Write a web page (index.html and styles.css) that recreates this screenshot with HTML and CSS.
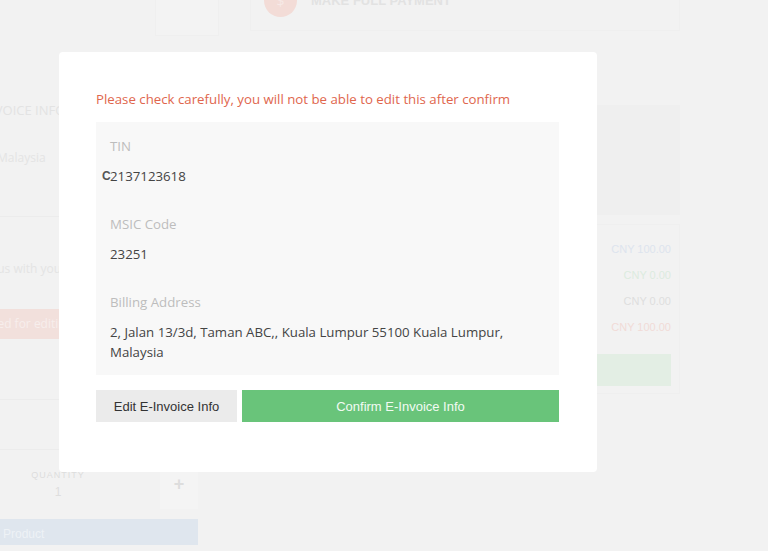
FILE: index.html
```html
<!DOCTYPE html>
<html>
<head>
<meta charset="utf-8">
<link rel="stylesheet" href="styles.css">
</head>
<body>
<div class="page">
  <div class="topbar">
    <div class="tile"></div>
    <div class="paycard">
      <span class="paydot">$</span>
      <span class="paytext">MAKE FULL PAYMENT</span>
    </div>
  </div>
  <div class="content">
    <div class="left">
      <div class="sec sec1">
        <div class="ltitle">E-INVOICE INFO</div>
        <div class="ltext">Malaysia</div>
      </div>
      <div class="sec sec2">
        <div class="ltext">Contact us with your</div>
        <div class="pinkbtn">Unlocked for editing</div>
      </div>
      <div class="sec sec3"></div>
      <div class="qtyrow">
        <div class="qty">
          <div class="qlabel">QUANTITY</div>
          <div class="qval">1</div>
        </div>
        <div class="plus">+</div>
      </div>
      <div class="product">Product</div>
    </div>
    <div class="main">
      <div class="mainpanel"></div>
      <div class="summary">
        <div class="amt blue">CNY 100.00</div>
        <div class="amt green">CNY 0.00</div>
        <div class="amt gray">CNY 0.00</div>
        <div class="amt red">CNY 100.00</div>
        <div class="greenbar"></div>
      </div>
    </div>
  </div>
</div>

<div class="modal">
  <p class="warn">Please check carefully, you will not be able to edit this after confirm</p>
  <div class="info">
    <div class="row">
      <div class="label">TIN</div>
      <div class="value"><span class="cglyph">C</span>2137123618</div>
    </div>
    <div class="row">
      <div class="label">MSIC Code</div>
      <div class="value">23251</div>
    </div>
    <div class="row">
      <div class="label">Billing Address</div>
      <div class="value">2, Jalan 13/3d, Taman ABC,, Kuala Lumpur 55100 Kuala Lumpur, Malaysia</div>
    </div>
  </div>
  <div class="actions">
    <button class="btn edit">Edit E-Invoice Info</button>
    <button class="btn confirm">Confirm E-Invoice Info</button>
  </div>
</div>
</body>
</html>
```

FILE: styles.css
```css
* { box-sizing: border-box; }
html, body {
  margin: 0;
  padding: 0;
  width: 768px;
  height: 551px;
  overflow: hidden;
  background: #f2f2f2;
  font-family: "Open Sans", "Liberation Sans", sans-serif;
}
.page {
  position: relative;
  height: 551px;
  overflow: hidden;
}
.topbar {
  display: flex;
  height: 36px;
  margin-top: -6px;
}
.tile {
  margin-left: 155px;
  width: 64px;
  height: 42px;
  border: 1px solid #efefef;
  background: #f3f3f3;
}
.paycard {
  margin-left: 31px;
  width: 430px;
  height: 37px;
  border: 1px solid #efefef;
  background: #f2f2f2;
  display: flex;
  align-items: flex-start;
}
.paydot {
  margin-left: 13px;
  margin-top: -11px;
  width: 33px;
  height: 33px;
  border-radius: 50%;
  background: #f3dcd7;
  color: #f6e9e6;
  font-size: 14px;
  text-align: center;
  line-height: 33px;
}
.paytext {
  margin-left: 14px;
  margin-top: -2px;
  font-family: "Liberation Sans", sans-serif;
  font-weight: bold;
  font-size: 13px;
  color: #e2e2e2;
}
.content {
  display: flex;
  height: 515px;
}
.left {
  width: 198px;
  overflow: hidden;
  display: flex;
  flex-direction: column;
}
.left > * { flex-shrink: 0; }
.sec {
  border-bottom: 1px solid #ececec;
}
.sec1 {
  height: 187px;
  padding-top: 70px;
}
.ltitle {
  font-size: 13px;
  color: #e3e3e3;
  line-height: 20px;
  margin-left: -30px;
  white-space: nowrap;
}
.ltext {
  font-size: 12px;
  color: #e4e4e4;
  line-height: 20px;
  margin-top: 28px;
  margin-left: -3px;
  white-space: nowrap;
}
.sec2 {
  height: 183px;
  padding-top: 42px;
}
.sec2 .ltext { margin-top: 0; margin-left: -49px; }
.pinkbtn {
  margin-top: 30px;
  margin-left: -55px;
  width: 180px;
  height: 30px;
  background: #f2e0dc;
  color: #f7eeec;
  font-size: 12px;
  line-height: 30px;
  padding-left: 14px;
  white-space: nowrap;
}
.sec3 {
  height: 50px;
}
.qtyrow {
  display: flex;
  height: 55px;
  margin-top: 4px;
}
.qty {
  flex: 1;
  text-align: center;
  padding-top: 16px;
  padding-right: 44px;
}
.qlabel {
  font-family: "Liberation Sans", sans-serif;
  font-size: 9px;
  line-height: 10px;
  letter-spacing: 1px;
  color: #dddddd;
}
.qval {
  font-family: "Liberation Sans", sans-serif;
  font-size: 12px;
  line-height: 14px;
  color: #dedede;
  margin-top: 5px;
}
.plus {
  width: 38px;
  background: #f4f4f4;
  color: #dddddd;
  font-family: "Liberation Sans", sans-serif;
  font-size: 18px;
  line-height: 21px;
  font-weight: bold;
  text-align: center;
  padding-top: 20px;
}
.product {
  height: 40px;
  background: #dfe6ee;
  color: #eef2f6;
  font-family: "Liberation Sans", sans-serif;
  font-size: 12px;
  line-height: 14px;
  padding: 8px 0 0 3px;
  margin-top: 10px;
}
.main {
  flex: 1;
  padding-left: 22px;
  display: flex;
  flex-direction: column;
}
.mainpanel {
  margin-top: 75px;
  width: 460px;
  height: 110px;
  background: #efefef;
}
.summary {
  margin-top: 9px;
  width: 460px;
  height: 170px;
  background: #f2f2f2;
  border: 1px solid #efefef;
  padding: 11px 8px 0 0;
  display: flex;
  flex-direction: column;
  align-items: flex-end;
}
.amt {
  font-family: "Liberation Sans", sans-serif;
  font-size: 11px;
  line-height: 26px;
}
.amt.blue { color: #dde4ee; }
.amt.green { color: #dcebdf; }
.amt.gray { color: #dedede; }
.amt.red { color: #f1dbd7; }
.greenbar {
  margin-top: 14px;
  width: 100%;
  height: 32px;
  background: #e3eee4;
}

/* modal */
.modal {
  position: absolute;
  left: 59px;
  top: 52px;
  width: 538px;
  height: 420px;
  background: #ffffff;
  border-radius: 4px;
  padding: 37px 38px 0 37px;
}
.warn {
  margin: 0;
  color: #e0664d;
  font-size: 13.25px;
  line-height: 20px;
}
.info {
  margin-top: 13px;
  background: #f8f8f8;
  padding: 14px 14px 13px 14px;
}
.row { margin-bottom: 28px; }
.row:last-child { margin-bottom: 0; }
.label {
  color: #bdbdbd;
  font-size: 13.25px;
  line-height: 20px;
}
.value {
  margin-top: 10px;
  color: #444444;
  font-size: 13.25px;
  line-height: 20px;
}
.cglyph {
  display: inline-block;
  width: 8px;
  margin-left: -8px;
  font-family: "Liberation Sans", sans-serif;
  font-weight: bold;
  font-size: 12px;
  color: #555555;
  vertical-align: 1px;
}
.actions {
  display: flex;
  gap: 5px;
  margin-top: 15px;
}
.btn {
  height: 32px;
  border: none;
  margin: 0;
  font-family: "Liberation Sans", Arial, sans-serif;
  font-size: 13px;
  padding: 0;
}
.edit {
  width: 141px;
  background: #ebebeb;
  color: #333333;
}
.confirm {
  flex: 1;
  background: #69c47a;
  color: #f2fbf3;
}
```
